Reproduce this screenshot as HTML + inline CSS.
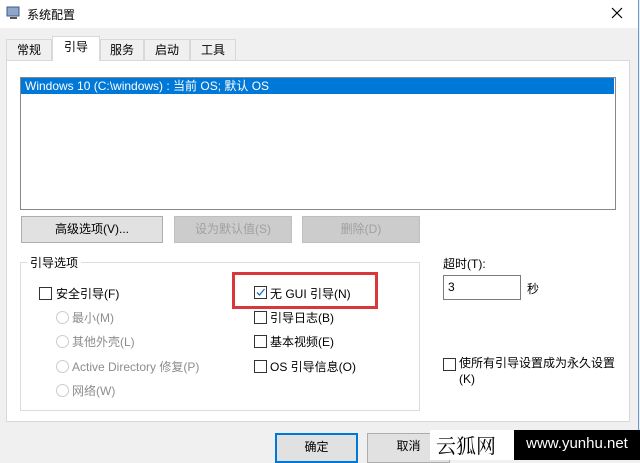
<!DOCTYPE html>
<html><head><meta charset="utf-8"><style>
*{box-sizing:border-box;margin:0;padding:0}
body{width:640px;height:460px;overflow:hidden;background:#f0f0f0;position:relative;font-family:"Liberation Sans","Noto Sans CJK SC",sans-serif;font-size:12px;color:#000}
.a{position:absolute}
.btn{position:absolute;background:#e1e1e1;border:1px solid #adadad;text-align:center;line-height:25px}
.dis{color:#a0a0a0;background:#cccccc;border-color:#bfbfbf}
.cb{position:absolute;width:13px;height:13px;border:1px solid #333;background:#fff}
.rd{position:absolute;width:13px;height:13px;border:1px solid #ccc;border-radius:50%;background:#fff}
.g{color:#8d8d8d}
.tab{position:absolute;top:39px;height:21px;border:1px solid #d9d9d9;border-bottom:none;background:#f0f0f0;text-align:center;line-height:20px}
</style></head><body>
<div class="a" style="left:0;top:0;width:638px;height:28px;background:#fff"></div>
<svg class="a" style="left:6px;top:6px" width="14" height="14"><rect x="1" y="1" width="12" height="9" fill="#8fa6c8" stroke="#3b5b8a"/><rect x="4" y="11" width="7" height="2" fill="#555"/></svg>
<div class="a" style="left:27px;top:6px">系统配置</div>
<svg class="a" style="left:178px;top:0" width="0" height="0"></svg>
<svg class="a" style="left:178px;top:8px;left:179px" width="0" height="0"></svg>
<svg class="a" style="left:179px;top:8px" width="0" height="0"></svg>
<svg class="a" style="left:178px;top:7px" width="0" height="0"></svg>
<svg class="a" style="left:178px;top:7px" width="0" height="0"></svg>
<svg class="a" style="left:178px;top:7px" width="0" height="0"></svg>
<svg class="a" style="left:178px;top:7px" width="0" height="0"></svg>
<svg class="a" style="left:178px;top:7px" width="0" height="0"></svg>
<svg class="a" style="left:178px;top:7px" width="0" height="0"></svg>
<svg class="a" style="left:178px;top:7px" width="0" height="0"></svg>
<svg class="a" style="left:178px;top:7px" width="0" height="0"></svg>
<svg class="a" style="left:178px;top:7px" width="0" height="0"></svg>
<svg class="a" style="left:178px;top:7px" width="0" height="0"></svg>
<svg class="a" style="left:178px;top:7px" width="0" height="0"></svg>
<svg class="a" style="left:178px;top:7px" width="0" height="0"></svg>
<svg class="a" style="left:178px;top:7px" width="0" height="0"></svg>
<svg class="a" style="left:178px;top:7px" width="0" height="0"></svg>
<svg class="a" style="left:178px;top:7px" width="0" height="0"></svg>
<svg class="a" style="left:178px;top:7px" width="0" height="0"></svg>
<svg class="a" style="left:178px;top:7px" width="0" height="0"></svg>
<svg class="a" style="left:178px;top:7px" width="0" height="0"></svg>
<svg class="a" style="left:178px;top:7px" width="0" height="0"></svg>
<svg class="a" style="left:178px;top:7px" width="0" height="0"></svg>
<svg class="a" style="left:178px;top:7px" width="0" height="0"></svg>
<svg class="a" style="left:178px;top:7px" width="0" height="0"></svg>
<svg class="a" style="left:178px;top:7px" width="0" height="0"></svg>
<svg class="a" style="left:610px;top:6px" width="14" height="14"><path d="M2 2L12 12M12 2L2 12" stroke="#000" stroke-width="1.2"/></svg>
<div class="a" style="left:638px;top:0;width:1px;height:460px;background:#6a9bd0"></div>
<div class="a" style="left:639px;top:0;width:1px;height:460px;background:#e8eef4"></div>
<div class="a" style="left:6px;top:60px;width:624px;height:362px;background:#fff;border:1px solid #d9d9d9"></div>
<div class="tab" style="left:6px;width:46px">常规</div>
<div class="tab" style="left:52px;top:36px;height:25px;width:48px;background:#fff">引导</div>
<div class="tab" style="left:100px;width:44px">服务</div>
<div class="tab" style="left:144px;width:46px">启动</div>
<div class="tab" style="left:190px;width:46px">工具</div>
<div class="a" style="left:20px;top:77px;width:596px;height:133px;border:1px solid #828790;background:#fff"></div>
<div class="a" style="left:21px;top:78px;width:593px;height:16px;background:#0078d7;color:#fff;line-height:16px;padding-left:4px">Windows 10 (C:\windows) : 当前 OS; 默认 OS</div>
<div class="btn" style="left:21px;top:216px;width:142px;height:27px">高级选项(V)...</div>
<div class="btn dis" style="left:174px;top:216px;width:118px;height:27px">设为默认值(S)</div>
<div class="btn dis" style="left:302px;top:216px;width:118px;height:27px">删除(D)</div>
<div class="a" style="left:20px;top:262px;width:400px;height:149px;border:1px solid #dcdcdc"></div>
<div class="a" style="left:27px;top:254px;background:#fff;padding:0 3px">引导选项</div>
<div class="cb" style="left:39px;top:287px"></div><div class="a" style="left:56px;top:285px">安全引导(F)</div>
<div class="rd" style="left:56px;top:311px"></div><div class="a g" style="left:72px;top:309px">最小(M)</div>
<div class="rd" style="left:56px;top:335px"></div><div class="a g" style="left:72px;top:333px">其他外壳(L)</div>
<div class="rd" style="left:56px;top:360px"></div><div class="a g" style="left:72px;top:358px">Active Directory 修复(P)</div>
<div class="rd" style="left:56px;top:384px"></div><div class="a g" style="left:72px;top:382px">网络(W)</div>
<div class="a" style="left:232px;top:272px;width:146px;height:37px;border:3px solid #d9383a"></div>
<div class="cb" style="left:254px;top:286px"><svg width="11" height="11" style="display:block"><path d="M2 5.5L4.5 8L9.5 2" stroke="#1f6fbf" stroke-width="1.3" fill="none"/></svg></div>
<div class="a" style="left:270px;top:285px">无 GUI 引导(N)</div>
<div class="cb" style="left:254px;top:311px"></div><div class="a" style="left:270px;top:309px">引导日志(B)</div>
<div class="cb" style="left:254px;top:335px"></div><div class="a" style="left:270px;top:333px">基本视频(E)</div>
<div class="cb" style="left:254px;top:360px"></div><div class="a" style="left:270px;top:358px">OS 引导信息(O)</div>
<div class="a" style="left:443px;top:255px">超时(T):</div>
<div class="a" style="left:443px;top:275px;width:78px;height:25px;border:1px solid #7a7a7a;background:#fff;padding:4px 0 0 4px">3</div>
<div class="a" style="left:527px;top:280px">秒</div>
<div class="cb" style="left:443px;top:358px"></div>
<div class="a" style="left:459px;top:355px;line-height:16px">使所有引导设置成为永久设置<br>(K)</div>
<div class="btn" style="left:275px;top:433px;width:83px;height:30px;border:2px solid #0078d7">确定</div>
<div class="btn" style="left:367px;top:433px;width:83px;height:30px">取消</div>
<div class="a" style="left:430px;top:430px;width:85px;height:30px;background:#fff;font-family:'Noto Serif CJK SC',serif;font-size:20px;line-height:30px;padding-left:6px">云狐网</div>
<div class="a" style="left:514px;top:430px;width:126px;height:30px;background:#000;color:#fff;font-size:15px;line-height:28px;text-align:center">www.yunhu.net</div>
</body></html>
